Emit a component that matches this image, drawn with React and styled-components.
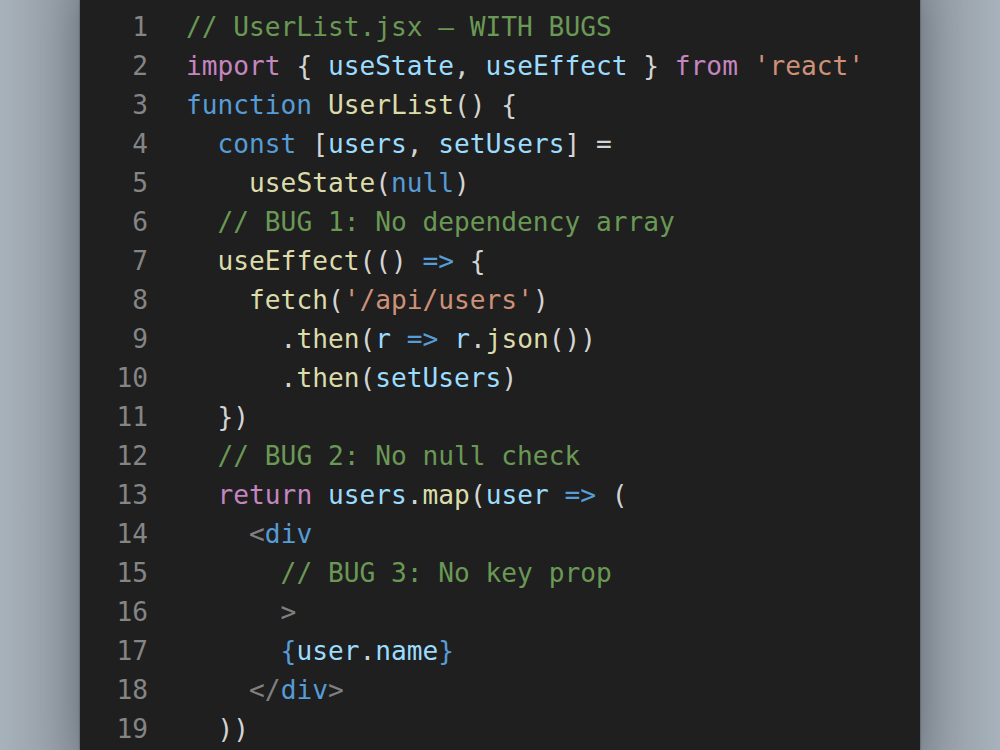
import React from 'react'
import styled, { createGlobalStyle } from 'styled-components'

const GlobalStyle = createGlobalStyle`
  html, body {
    margin: 0;
    padding: 0;
    background: #a6b0b9;
  }
`

const palette = {
  cm: '#6a9955',
  kw: '#c586c0',
  st: '#569cd6',
  fn: '#dcdcaa',
  vr: '#9cdcfe',
  str: '#ce9178',
  tx: '#d4d4d4',
  tg: '#808080',
}

const Page = styled.div`
  width: 1000px;
  height: 750px;
  overflow: hidden;
  display: flex;
  justify-content: center;
  background: linear-gradient(90deg, #a8b2bb 0%, #98a1aa 5%, #8a939c 8%, #a8b2bb 12%, #a8b2bb 88%, #8a939c 92%, #98a1aa 95%, #a8b2bb 100%);
`

const Editor = styled.div`
  width: 840px;
  height: 750px;
  background: #1f1f1f;
  box-shadow: 0 0 40px rgba(40, 48, 56, 0.3), 0 0 2px rgba(0, 0, 0, 0.5);
  padding-top: 8px;
  box-sizing: border-box;
  font-family: 'DejaVu Sans Mono', 'Liberation Mono', monospace;
  font-size: 26.2px;
  line-height: 39px;
`

const Row = styled.div`
  display: flex;
  gap: 38px;
  white-space: pre;
`

const LineNo = styled.span`
  width: 68px;
  text-align: right;
  color: #858585;
`

const Code = styled.code`
  font: inherit;
`

const Tok = styled.span`
  color: ${p => palette[p.$c] || palette.tx};
`

const lines = [
  [['cm', '// UserList.jsx — WITH BUGS']],
  [['kw', 'import'], ['tx', ' { '], ['vr', 'useState'], ['tx', ', '], ['vr', 'useEffect'], ['tx', ' } '], ['kw', 'from'], ['tx', ' '], ['str', "'react'"]],
  [['st', 'function'], ['tx', ' '], ['fn', 'UserList'], ['tx', '() {']],
  [['tx', '  '], ['st', 'const'], ['tx', ' ['], ['vr', 'users'], ['tx', ', '], ['vr', 'setUsers'], ['tx', '] =']],
  [['tx', '    '], ['fn', 'useState'], ['tx', '('], ['st', 'null'], ['tx', ')']],
  [['tx', '  '], ['cm', '// BUG 1: No dependency array']],
  [['tx', '  '], ['fn', 'useEffect'], ['tx', '(() '], ['st', '=>'], ['tx', ' {']],
  [['tx', '    '], ['fn', 'fetch'], ['tx', '('], ['str', "'/api/users'"], ['tx', ')']],
  [['tx', '      .'], ['fn', 'then'], ['tx', '('], ['vr', 'r'], ['tx', ' '], ['st', '=>'], ['tx', ' '], ['vr', 'r'], ['tx', '.'], ['fn', 'json'], ['tx', '())']],
  [['tx', '      .'], ['fn', 'then'], ['tx', '('], ['vr', 'setUsers'], ['tx', ')']],
  [['tx', '  })']],
  [['tx', '  '], ['cm', '// BUG 2: No null check']],
  [['tx', '  '], ['kw', 'return'], ['tx', ' '], ['vr', 'users'], ['tx', '.'], ['fn', 'map'], ['tx', '('], ['vr', 'user'], ['tx', ' '], ['st', '=>'], ['tx', ' (']],
  [['tx', '    '], ['tg', '<'], ['st', 'div']],
  [['tx', '      '], ['cm', '// BUG 3: No key prop']],
  [['tx', '      '], ['tg', '>']],
  [['tx', '      '], ['st', '{'], ['vr', 'user'], ['tx', '.'], ['vr', 'name'], ['st', '}']],
  [['tx', '    '], ['tg', '</'], ['st', 'div'], ['tg', '>']],
  [['tx', '  ))']],
]

export default function App() {
  return (
    <>
      <GlobalStyle />
      <Page>
        <Editor>
          {lines.map((toks, i) => (
            <Row key={i}>
              <LineNo>{i + 1}</LineNo>
              <Code>
                {toks.map(([c, t], j) => (
                  <Tok key={j} $c={c}>{t}</Tok>
                ))}
              </Code>
            </Row>
          ))}
        </Editor>
      </Page>
    </>
  )
}
